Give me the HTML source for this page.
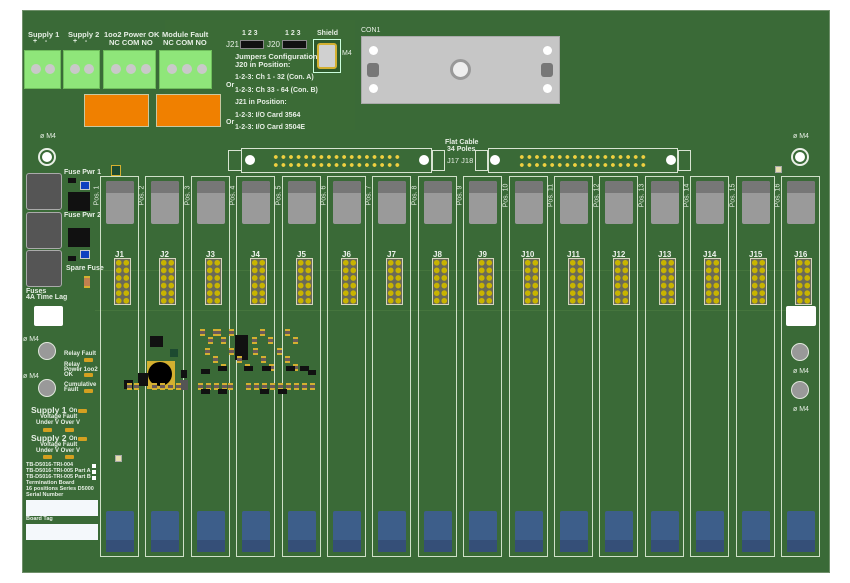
<!DOCTYPE html>
<html><head><meta charset="utf-8"><style>
*{margin:0;padding:0;box-sizing:border-box}
body{width:850px;height:583px;background:#fff;position:relative;overflow:hidden;font-family:"Liberation Sans",sans-serif}
#b{position:absolute;left:22px;top:10px;width:808px;height:563px;background:#3a6a37;border:1px solid #6f8f6a}
.a{position:absolute}
.t{position:absolute;color:#e6eee4;font-weight:bold;font-size:7px;line-height:1;white-space:nowrap}
.slot{position:absolute;top:176px;width:39px;height:381px;border:1px solid #cfe0c8}
.g{position:absolute;left:5px;top:4px;width:28px;height:43px;background:#9a9a9a;border-radius:2px}
.g:before{content:"";position:absolute;left:0;top:0;right:0;height:12px;background:#777;border-radius:2px 2px 0 0}
.bl{position:absolute;left:5px;top:334px;width:28px;height:41px;background:#3d5e8a;border-radius:2px}
.bl:after{content:"";position:absolute;left:0;bottom:0;right:0;height:12px;background:#354f78}
.hd{position:absolute;top:258px;width:17px;height:47px;background:#6a6a58;border:1px solid #d6d6c0;
background-image:radial-gradient(circle,#c8b400 2.6px,transparent 3px);background-size:7.5px 7.6px;background-position:0px 0px}
.pos{position:absolute;top:192px;color:#dfe9dc;font-size:7px;transform:rotate(-90deg);transform-origin:center;white-space:nowrap;width:26px;text-align:center}
.jl{position:absolute;top:250px;color:#eef3ec;font-size:8px;font-weight:bold}
.term{position:absolute;top:50px;height:39px;background:#8fe67a;border:1px solid #6fbe5c}
.dot{position:absolute;top:13px;width:10px;height:10px;border-radius:50%;background:#c9c9c9}
.hole{position:absolute;width:18px;height:18px;border-radius:50%;border:2px solid #e9efe6;background:#3a6a37}
.hole:after{content:"";position:absolute;left:2px;top:2px;width:10px;height:10px;border-radius:50%;background:#fff}
.gc{position:absolute;width:18px;height:18px;border-radius:50%;border:1.5px solid #e0e8dc;background:#999}
.fb{position:absolute;left:26px;width:36px;height:37px;background:#555;border:1px solid #aaa;border-radius:3px}
.blk{position:absolute;background:#111}
.smd{position:absolute;width:5px;height:7px;background:#6a5a5a;border-top:2px solid #d4b030;border-bottom:2px solid #d4b030}
.con{position:absolute;top:148px;height:25px;border:1px solid #d8e4d2}
.cd{position:absolute;top:153px;height:16px;background-image:radial-gradient(circle,#f0d040 1.7px,transparent 2.1px);background-size:7.6px 8px}
.led{position:absolute;width:9px;height:4px;background:#d4a020;border-radius:1px}
.wb{position:absolute;background:#f4f8fb}
</style></head><body>
<div id="b"></div>
<div class="a" style="left:95px;top:270px;width:700px;height:1px;background:#4a7a40;opacity:.7"></div>
<div class="a" style="left:95px;top:310px;width:700px;height:1px;background:#4a7a40;opacity:.7"></div>
<div class="a" style="left:165px;top:20px;width:190px;height:110px;background:#3c6c36;opacity:.6"></div>

<div class="t" style="left:28px;top:31px;font-size:7.5px">Supply 1</div>
<div class="t" style="left:33px;top:38px">+&nbsp;&nbsp;&nbsp;&nbsp;-</div>
<div class="t" style="left:68px;top:31px;font-size:7.5px">Supply 2</div>
<div class="t" style="left:73px;top:38px">+&nbsp;&nbsp;&nbsp;&nbsp;-</div>
<div class="t" style="left:104px;top:31px;font-size:7.5px">1oo2 Power OK</div>
<div class="t" style="left:109px;top:39px;font-size:7.5px">NC COM NO</div>
<div class="t" style="left:162px;top:31px;font-size:7.5px">Module Fault</div>
<div class="t" style="left:163px;top:39px;font-size:7.5px">NC COM NO</div>
<div class="term" style="left:24px;width:37px"><div class="dot" style="left:6px"></div><div class="dot" style="left:20px"></div></div>
<div class="term" style="left:63px;width:37px"><div class="dot" style="left:6px"></div><div class="dot" style="left:20px"></div></div>
<div class="term" style="left:103px;width:53px"><div class="dot" style="left:7px"></div><div class="dot" style="left:22px"></div><div class="dot" style="left:37px"></div></div>
<div class="term" style="left:159px;width:53px"><div class="dot" style="left:7px"></div><div class="dot" style="left:22px"></div><div class="dot" style="left:37px"></div></div>
<div class="a" style="left:84px;top:94px;width:65px;height:33px;background:#f08000;border:1px solid #c8c8a0"></div>
<div class="a" style="left:156px;top:94px;width:65px;height:33px;background:#f08000;border:1px solid #c8c8a0"></div>

<div class="t" style="left:242px;top:30px">1 2 3</div>
<div class="t" style="left:285px;top:30px">1 2 3</div>
<div class="t" style="left:226px;top:41px;font-size:8px;font-weight:normal">J21</div>
<div class="a" style="left:240px;top:40px;width:24px;height:9px;background:#111;border:1px solid #888"></div>
<div class="t" style="left:267px;top:41px;font-size:8px;font-weight:normal">J20</div>
<div class="a" style="left:282px;top:40px;width:25px;height:9px;background:#111;border:1px solid #888"></div>
<div class="t" style="left:317px;top:30px">Shield</div>
<div class="a" style="left:313px;top:39px;width:28px;height:34px;background:#2f5a2c;border:1px solid #cfd"></div>
<div class="a" style="left:317px;top:43px;width:20px;height:26px;background:#d0d0d0;border:2px solid #d4b030;border-radius:3px"></div>
<div class="t" style="left:342px;top:50px;font-weight:normal">M4</div>
<div class="t" style="left:235px;top:53px;font-size:7.5px">Jumpers Configuration</div>
<div class="t" style="left:235px;top:61px;font-size:7.5px">J20 in Position:</div>
<div class="t" style="left:235px;top:74px">1-2-3: Ch 1 - 32 (Con. A)</div>
<div class="t" style="left:226px;top:82px">Or</div>
<div class="t" style="left:235px;top:87px">1-2-3: Ch 33 - 64 (Con. B)</div>
<div class="t" style="left:235px;top:99px">J21 in Position:</div>
<div class="t" style="left:235px;top:112px">1-2-3: I/O Card 3564</div>
<div class="t" style="left:226px;top:119px">Or</div>
<div class="t" style="left:235px;top:124px">1-2-3: I/O Card 3504E</div>

<div class="t" style="left:361px;top:27px;font-weight:normal">CON1</div>
<div class="a" style="left:361px;top:36px;width:199px;height:68px;background:#c6c6c6;border:1px solid #aaa"></div>
<div class="a" style="left:369px;top:46px;width:9px;height:9px;border-radius:50%;background:#fff"></div>
<div class="a" style="left:369px;top:84px;width:9px;height:9px;border-radius:50%;background:#fff"></div>
<div class="a" style="left:543px;top:46px;width:9px;height:9px;border-radius:50%;background:#fff"></div>
<div class="a" style="left:543px;top:84px;width:9px;height:9px;border-radius:50%;background:#fff"></div>
<div class="a" style="left:367px;top:63px;width:12px;height:14px;background:#777;border-radius:3px"></div>
<div class="a" style="left:541px;top:63px;width:12px;height:14px;background:#777;border-radius:3px"></div>
<div class="a" style="left:450px;top:59px;width:21px;height:21px;border-radius:50%;background:#eee;border:3px solid #999"></div>

<div class="t" style="left:445px;top:139px">Flat Cable</div>
<div class="t" style="left:447px;top:146px">34 Poles</div>
<div class="t" style="left:447px;top:157px;font-weight:normal;font-size:7.5px">J17 J18</div>
<div class="a" style="left:228px;top:150px;width:14px;height:21px;border:1px solid #d8e4d2"></div>
<div class="con" style="left:241px;width:191px"></div>
<div class="cd" style="left:272px;width:130px"></div>
<div class="a" style="left:432px;top:150px;width:13px;height:21px;border:1px solid #d8e4d2"></div>
<div class="a" style="left:245px;top:155px;width:10px;height:10px;border-radius:50%;background:#fff"></div>
<div class="a" style="left:419px;top:155px;width:10px;height:10px;border-radius:50%;background:#fff"></div>
<div class="a" style="left:475px;top:150px;width:13px;height:21px;border:1px solid #d8e4d2"></div>
<div class="con" style="left:488px;width:190px"></div>
<div class="cd" style="left:518px;width:130px"></div>
<div class="a" style="left:678px;top:150px;width:13px;height:21px;border:1px solid #d8e4d2"></div>
<div class="a" style="left:490px;top:155px;width:10px;height:10px;border-radius:50%;background:#fff"></div>
<div class="a" style="left:666px;top:155px;width:10px;height:10px;border-radius:50%;background:#fff"></div>
<div class="a" style="left:111px;top:165px;width:10px;height:11px;background:#1d4a30;border:1px solid #d4b030"></div>

<div class="t" style="left:40px;top:133px;font-weight:normal">ø M4</div>
<div class="hole" style="left:38px;top:148px"></div>
<div class="t" style="left:793px;top:133px;font-weight:normal">ø M4</div>
<div class="hole" style="left:791px;top:148px"></div>
<div class="a" style="left:775px;top:166px;width:7px;height:7px;background:#e8e0b0;border:1px solid #aaa"></div>

<div class="fb" style="top:173px"></div>
<div class="fb" style="top:212px"></div>
<div class="fb" style="top:250px"></div>
<div class="t" style="left:64px;top:169px">Fuse Pwr 1</div>
<div class="blk" style="left:68px;top:178px;width:8px;height:5px"></div>
<div class="a" style="left:80px;top:181px;width:10px;height:9px;background:#1040c0;border:1px solid #ccc"></div>
<div class="blk" style="left:68px;top:192px;width:22px;height:19px"></div>
<div class="t" style="left:64px;top:212px">Fuse Pwr 2</div>
<div class="blk" style="left:68px;top:228px;width:22px;height:19px"></div>
<div class="a" style="left:80px;top:250px;width:10px;height:9px;background:#1040c0;border:1px solid #ccc"></div>
<div class="blk" style="left:68px;top:256px;width:8px;height:5px"></div>
<div class="t" style="left:66px;top:265px">Spare Fuse</div>
<div class="smd" style="left:84px;top:276px;width:6px;height:12px;background:#c08050"></div>
<div class="t" style="left:26px;top:288px">Fuses</div>
<div class="t" style="left:26px;top:294px">4A Time Lag</div>
<div class="wb" style="left:34px;top:306px;width:29px;height:20px;border-radius:2px;background:#fff"></div>

<div class="t" style="left:23px;top:336px;font-weight:normal">ø M4</div>
<div class="gc" style="left:38px;top:342px"></div>
<div class="t" style="left:23px;top:373px;font-weight:normal">ø M4</div>
<div class="gc" style="left:38px;top:379px"></div>
<div class="t" style="left:64px;top:351px;font-size:6px">Relay Fault</div>
<div class="led" style="left:84px;top:358px"></div>
<div class="t" style="left:64px;top:362px;font-size:6px">Relay</div>
<div class="t" style="left:64px;top:367px;font-size:6px">Power 1oo2</div>
<div class="t" style="left:64px;top:372px;font-size:6px">OK</div>
<div class="led" style="left:84px;top:373px"></div>
<div class="t" style="left:64px;top:382px;font-size:6px">Cumulative</div>
<div class="t" style="left:64px;top:387px;font-size:6px">Fault</div>
<div class="led" style="left:84px;top:389px"></div>

<div class="t" style="left:31px;top:406px;font-size:8.5px">Supply 1</div>
<div class="t" style="left:69px;top:408px;font-size:6px">On</div><div class="led" style="left:78px;top:409px"></div>
<div class="t" style="left:40px;top:414px;font-size:6px">Voltage Fault</div>
<div class="t" style="left:36px;top:420px;font-size:6px">Under V Over V</div>
<div class="led" style="left:43px;top:428px"></div><div class="led" style="left:65px;top:428px"></div>
<div class="t" style="left:31px;top:434px;font-size:8.5px">Supply 2</div>
<div class="t" style="left:69px;top:436px;font-size:6px">On</div><div class="led" style="left:78px;top:437px"></div>
<div class="t" style="left:40px;top:442px;font-size:6px">Voltage Fault</div>
<div class="t" style="left:36px;top:448px;font-size:6px">Under V Over V</div>
<div class="led" style="left:43px;top:455px"></div><div class="led" style="left:65px;top:455px"></div>
<div class="a" style="left:115px;top:455px;width:7px;height:7px;background:#e8e0b0;border:1px solid #aaa"></div>

<div class="t" style="left:26px;top:463px;font-size:5.5px">TB-D5016-TRI-004</div>
<div class="t" style="left:26px;top:469px;font-size:5.5px">TB-D5016-TRI-005 Part A</div>
<div class="t" style="left:26px;top:475px;font-size:5.5px">TB-D5016-TRI-005 Part B</div>
<div class="t" style="left:26px;top:481px;font-size:5.5px">Termination Board</div>
<div class="t" style="left:26px;top:487px;font-size:5.5px">16 positions Series D5000</div>
<div class="a" style="left:92px;top:464px;width:4px;height:4px;background:#fff"></div>
<div class="a" style="left:92px;top:470px;width:4px;height:4px;background:#fff"></div>
<div class="a" style="left:92px;top:476px;width:4px;height:4px;background:#fff"></div>
<div class="t" style="left:26px;top:493px;font-size:5.5px">Serial Number</div>
<div class="wb" style="left:26px;top:500px;width:72px;height:16px"></div>
<div class="t" style="left:26px;top:517px;font-size:5.5px">Board Tag</div>
<div class="wb" style="left:26px;top:524px;width:72px;height:16px"></div>

<div class="wb" style="left:786px;top:306px;width:30px;height:20px;border-radius:2px;background:#fff"></div>
<div class="gc" style="left:791px;top:343px"></div>
<div class="t" style="left:793px;top:368px;font-weight:normal">ø M4</div>
<div class="gc" style="left:791px;top:381px"></div>
<div class="t" style="left:793px;top:406px;font-weight:normal">ø M4</div>

<div id="slots"></div>
<div class="pos" style="left:84px">Pos. 1</div><div class="pos" style="left:129px">Pos. 2</div><div class="pos" style="left:175px">Pos. 3</div><div class="pos" style="left:220px">Pos. 4</div><div class="pos" style="left:266px">Pos. 5</div><div class="pos" style="left:311px">Pos. 6</div><div class="pos" style="left:356px">Pos. 7</div><div class="pos" style="left:402px">Pos. 8</div><div class="pos" style="left:447px">Pos. 9</div><div class="pos" style="left:493px">Pos. 10</div><div class="pos" style="left:538px">Pos. 11</div><div class="pos" style="left:584px">Pos. 12</div><div class="pos" style="left:629px">Pos. 13</div><div class="pos" style="left:674px">Pos. 14</div><div class="pos" style="left:720px">Pos. 15</div><div class="pos" style="left:765px">Pos. 16</div>
<div class="jl" style="left:115px">J1</div><div class="jl" style="left:160px">J2</div><div class="jl" style="left:206px">J3</div><div class="jl" style="left:251px">J4</div><div class="jl" style="left:297px">J5</div><div class="jl" style="left:342px">J6</div><div class="jl" style="left:387px">J7</div><div class="jl" style="left:433px">J8</div><div class="jl" style="left:478px">J9</div><div class="jl" style="left:521px">J10</div><div class="jl" style="left:567px">J11</div><div class="jl" style="left:612px">J12</div><div class="jl" style="left:658px">J13</div><div class="jl" style="left:703px">J14</div><div class="jl" style="left:749px">J15</div><div class="jl" style="left:794px">J16</div>

<div id="cl"></div>
<script>
var s='';
for(var i=0;i<16;i++){var x=Math.round(100+45.4*i);
s+='<div class="slot" style="left:'+x+'px"><div class="g"></div><div class="bl"></div></div>';
s+='<div class="hd" style="left:'+(x+14)+'px"></div>';}
document.getElementById('slots').innerHTML=s;
var c='';
function r(x,y,w,h,col){c+='<div class="a" style="left:'+x+'px;top:'+y+'px;width:'+w+'px;height:'+h+'px;background:'+col+'"></div>';}
function sm(x,y){c+='<div class="smd" style="left:'+x+'px;top:'+y+'px"></div>';}
r(150,336,13,11,'#111');r(170,349,8,8,'#1d4a30');
r(147,361,28,28,'#d4b030');c+='<div class="a" style="left:148px;top:362px;width:24px;height:24px;border-radius:50%;background:#000"></div>';
r(124,380,9,9,'#111');r(138,373,10,13,'#111');r(181,370,6,8,'#111');r(180,380,8,10,'#555');
r(235,335,13,25,'#111');r(308,370,8,5,'#111');
var xs=[127,134,152,160,168,176,198,206,214,222,228,246,254,262,270,278,286,294,302,310];
for(var k=0;k<xs.length;k++){sm(xs[k],383);}
var xs2=[200,208,216,252,260,268,285,293,213,221,229];
for(var k=0;k<xs2.length;k++){sm(xs2[k],329+(k%2)*8);}
for(var k=0;k<12;k++){sm(205+k*8,348+(k%3)*8);}
[[201,369],[218,366],[244,366],[262,366],[286,366],[300,366],[201,389],[218,389],[260,389],[278,389]].forEach(function(p){r(p[0],p[1],9,5,'#111');});
document.getElementById('cl').innerHTML=c;
</script>
</body></html>
